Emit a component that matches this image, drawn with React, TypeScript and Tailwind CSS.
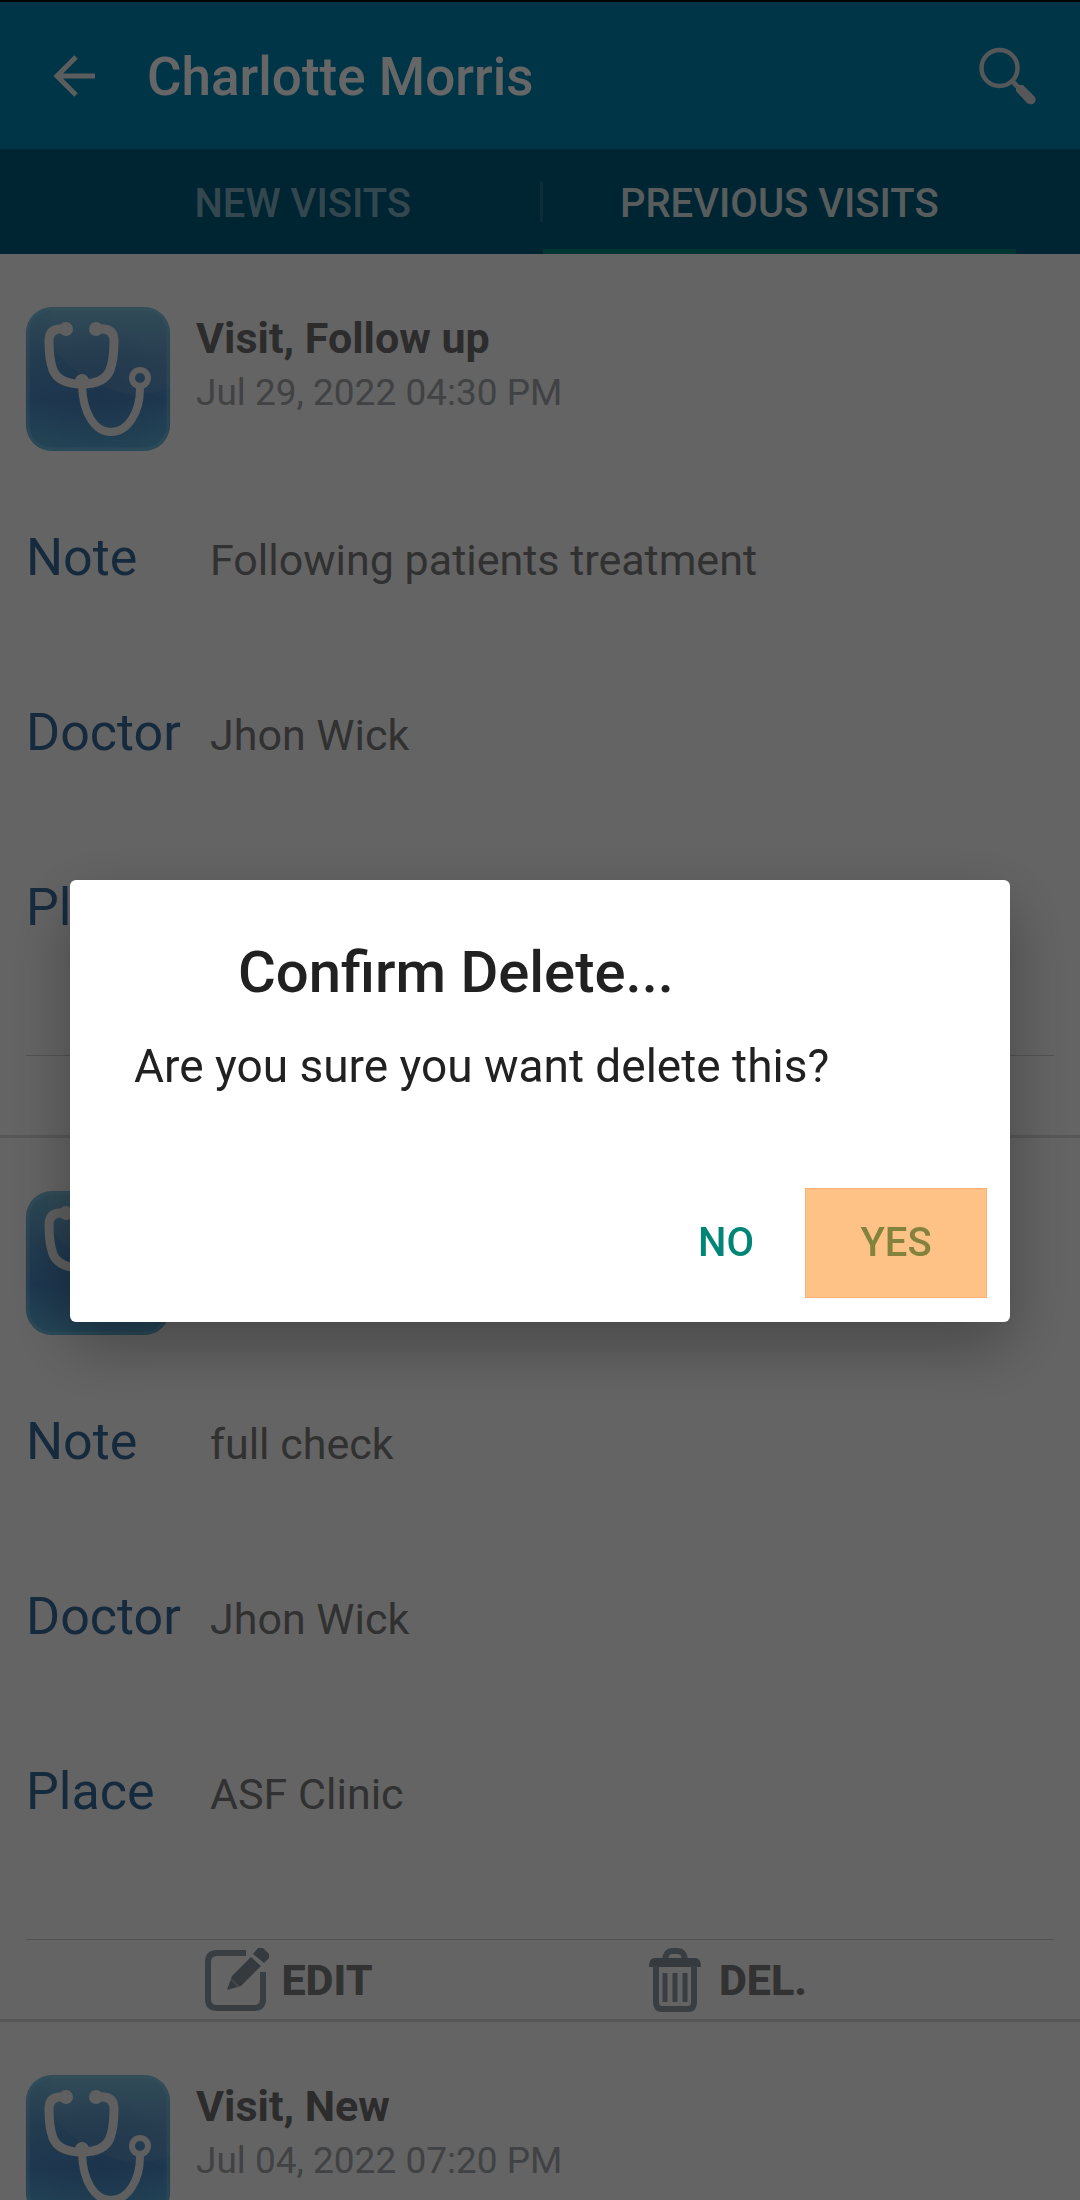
import React, { useState } from 'react';

interface Visit {
  id: number;
  title: string;
  date: string;
  note: string;
  doctor: string;
  place: string;
}

const visits: Visit[] = [
  { id: 1, title: 'Visit, Follow up', date: 'Jul 29, 2022 04:30 PM', note: 'Following patients treatment', doctor: 'Jhon Wick', place: 'ASF Clinic' },
  { id: 2, title: 'Visit, New', date: 'Jul 14, 2022 05:00 PM', note: 'full check', doctor: 'Jhon Wick', place: 'ASF Clinic' },
  { id: 3, title: 'Visit, New', date: 'Jul 04, 2022 07:20 PM', note: 'full check', doctor: 'Jhon Wick', place: 'ASF Clinic' },
];

function BackIcon() {
  return (
    <svg className="w-[42px] h-[42px]" viewBox="0 0 42 42" fill="none" stroke="currentColor" strokeWidth="5">
      <path d="M42 21H4M23 2L4 21L23 40" />
    </svg>
  );
}

function SearchIcon() {
  return (
    <svg className="w-[58px] h-[58px]" viewBox="0 0 58 58" fill="none" stroke="currentColor">
      <circle cx="20.5" cy="21" r="18" strokeWidth="4.5" />
      <path d="M33 34L39 40" strokeWidth="5" />
      <path d="M40 38L44 38L56 50Q58 54 54 57Q51 58 48 56L37 44V41Z" fill="currentColor" stroke="none" />
    </svg>
  );
}

function StethoscopeIcon() {
  return (
    <svg className="w-36 h-36 shrink-0" viewBox="0 0 144 144" fill="none">
      <defs>
        <linearGradient id="tile" x1="0" y1="0" x2="0" y2="1">
          <stop offset="0" stopColor="#74b8d8" />
          <stop offset="0.35" stopColor="#5a96c6" />
          <stop offset="0.65" stopColor="#4c8cc8" />
          <stop offset="1" stopColor="#5bb0d8" />
        </linearGradient>
        <radialGradient id="glow" cx="0.5" cy="0.6" r="0.5">
          <stop offset="0" stopColor="#447fb8" stopOpacity="0.6" />
          <stop offset="1" stopColor="#447fb8" stopOpacity="0" />
        </radialGradient>
      </defs>
      <rect width="144" height="144" rx="26" fill="url(#tile)" />
      <rect width="144" height="144" rx="26" fill="url(#glow)" />
      <path d="M26 0H118A26 26 0 0 1 144 26V80C110 98 62 82 30 44C18 28 20 10 26 0Z" fill="#fff" fillOpacity="0.06" />
      <rect x="2" y="2" width="140" height="140" rx="24" stroke="#8fd0ea" strokeOpacity="0.35" strokeWidth="3" />
      <g stroke="#eee" strokeLinecap="round">
        <path d="M40 22H33Q23 23 23 34C23 46 24 55 27 63C31 73 42 77 56 77C70 77 80 73 84 63C87 55 88 46 88 34Q88 23 78 22H70" strokeWidth="9" />
        <path d="M56 79C57 105 68 125 85 125C102 125 114 105 114 82" strokeWidth="8" />
        <circle cx="114" cy="71" r="8" strokeWidth="6" />
      </g>
      <g fill="#eee">
        <circle cx="40" cy="22" r="7" />
        <circle cx="70" cy="22" r="7" />
        <circle cx="56" cy="74" r="7" />
      </g>
    </svg>
  );
}

function EditIcon() {
  return (
    <svg className="w-16 h-16" viewBox="0 0 64 64" fill="none">
      <path d="M41 5H12Q3 5 3 14V51Q3 60 12 60H49Q58 60 58 51V24" stroke="#8c9ba5" strokeWidth="6" />
      <path d="M22 42L27 28L46 9L56 18L36 38Z" fill="#82919a" />
      <path d="M48 6L53 0H58L64 6V10L59 15Z" fill="#82919a" />
      <path d="M26 31L34 39" stroke="#b8c0c5" strokeWidth="1.5" />
    </svg>
  );
}

function TrashIcon() {
  return (
    <svg className="w-16 h-16" viewBox="0 0 64 64" fill="none" stroke="#8c9ba5">
      <path d="M22 12Q23 3 29 3H35Q41 3 42 12" strokeWidth="6" />
      <path d="M6 19Q6 10 12 10H52Q58 10 58 19Z" fill="#82919a" stroke="none" />
      <path d="M13 18V54Q13 61 19 61H45Q51 61 51 54V18" strokeWidth="6" />
      <path d="M22 25V54M32 25V54M42 25V54" strokeWidth="5" />
    </svg>
  );
}

function DetailRow({ label, value }: { label: string; value: string }) {
  return (
    <div className="h-[175px] flex items-baseline">
      <dt className="w-[184px] text-[52px] leading-[60px] text-[#386a9c]">{label}</dt>
      <dd className="text-[43px] leading-[60px] text-[#7b7b7b]">{value}</dd>
    </div>
  );
}

function VisitCard({ visit, onDelete }: { visit: Visit; onDelete: () => void }) {
  return (
    <article className="border-b-[3px] border-[#dadada]">
      <div className="px-[26px] pt-[53px]">
        <div className="flex gap-[26px]">
          <StethoscopeIcon />
          <div className="pt-1">
            <h2 className="text-[43px] leading-[55px] font-bold text-[#6e6e6e]">{visit.title}</h2>
            <p className="text-[37px] leading-[54px] text-[#a2a5a8]">{visit.date}</p>
          </div>
        </div>
        <dl className="pt-[77px] pb-0.5">
          <DetailRow label="Note" value={visit.note} />
          <DetailRow label="Doctor" value={visit.doctor} />
          <DetailRow label="Place" value={visit.place} />
        </dl>
        <div className="h-20 border-t border-[#cecece] grid grid-cols-2 text-[43px] font-extrabold text-[#7d7d7d]">
          <button className="flex items-center justify-center gap-3 pl-3">
            <EditIcon />
            <span className="pt-0.5">EDIT</span>
          </button>
          <button onClick={onDelete} className="flex items-center justify-center gap-3 pr-36">
            <TrashIcon />
            <span className="pt-0.5">DEL.</span>
          </button>
        </div>
      </div>
    </article>
  );
}

export default function App() {
  const [confirmOpen, setConfirmOpen] = useState(true);

  return (
    <div className="h-screen overflow-hidden bg-[#fafafa] font-[Roboto,sans-serif]">
      <header className="border-t-2 border-black bg-[#0085b1]">
        <div className="h-[147px] flex items-center pl-[53px] pr-[43px]">
          <button aria-label="Back" className="text-[#e4e8ea]">
            <BackIcon />
          </button>
          <h1 className="flex-1 pl-[52px] pt-1 text-[53px] font-medium text-white">Charlotte Morris</h1>
          <button aria-label="Search" className="text-[#d5dadd]">
            <SearchIcon />
          </button>
        </div>
        <nav className="h-[105px] pl-[66px] pr-16 flex items-stretch bg-[#005c7d] text-[40px] font-medium">
          <button className="flex-1 pt-1 text-[#86b2c2]">NEW VISITS</button>
          <div className="w-[3px] my-8 bg-[#1f6f88]" />
          <button className="flex-1 pt-1 border-y-[5px] border-t-transparent border-b-[#00877a] text-[#dde5e8]">
            PREVIOUS VISITS
          </button>
        </nav>
      </header>

      <main>
        {visits.map((visit) => (
          <VisitCard key={visit.id} visit={visit} onDelete={() => setConfirmOpen(true)} />
        ))}
      </main>

      {confirmOpen && (
        <div className="fixed inset-0 flex items-center justify-center px-[70px] pt-0.5 bg-black/60">
          <div
            role="dialog"
            aria-labelledby="confirm-title"
            className="w-full rounded-md bg-white text-[#212121] shadow-[0_24px_64px_rgba(0,0,0,0.3)]"
          >
            <div className="px-16 pt-[58px]">
              <h2 id="confirm-title" className="pl-[104px] text-[58px] leading-[68px] font-medium">
                Confirm Delete...
              </h2>
              <p className="pt-[30px] text-[46px] leading-[60px]">Are you sure you want delete this?</p>
            </div>
            <div className="flex justify-end pt-[92px] pr-[23px] pb-6 text-[40px] font-medium">
              <button onClick={() => setConfirmOpen(false)} className="w-[158px] h-[110px] text-[#008577]">
                NO
              </button>
              <button
                onClick={() => setConfirmOpen(false)}
                className="w-[182px] h-[110px] border border-[#ffb07a] bg-[#fec286] text-[#84833e]"
              >
                YES
              </button>
            </div>
          </div>
        </div>
      )}
    </div>
  );
}
